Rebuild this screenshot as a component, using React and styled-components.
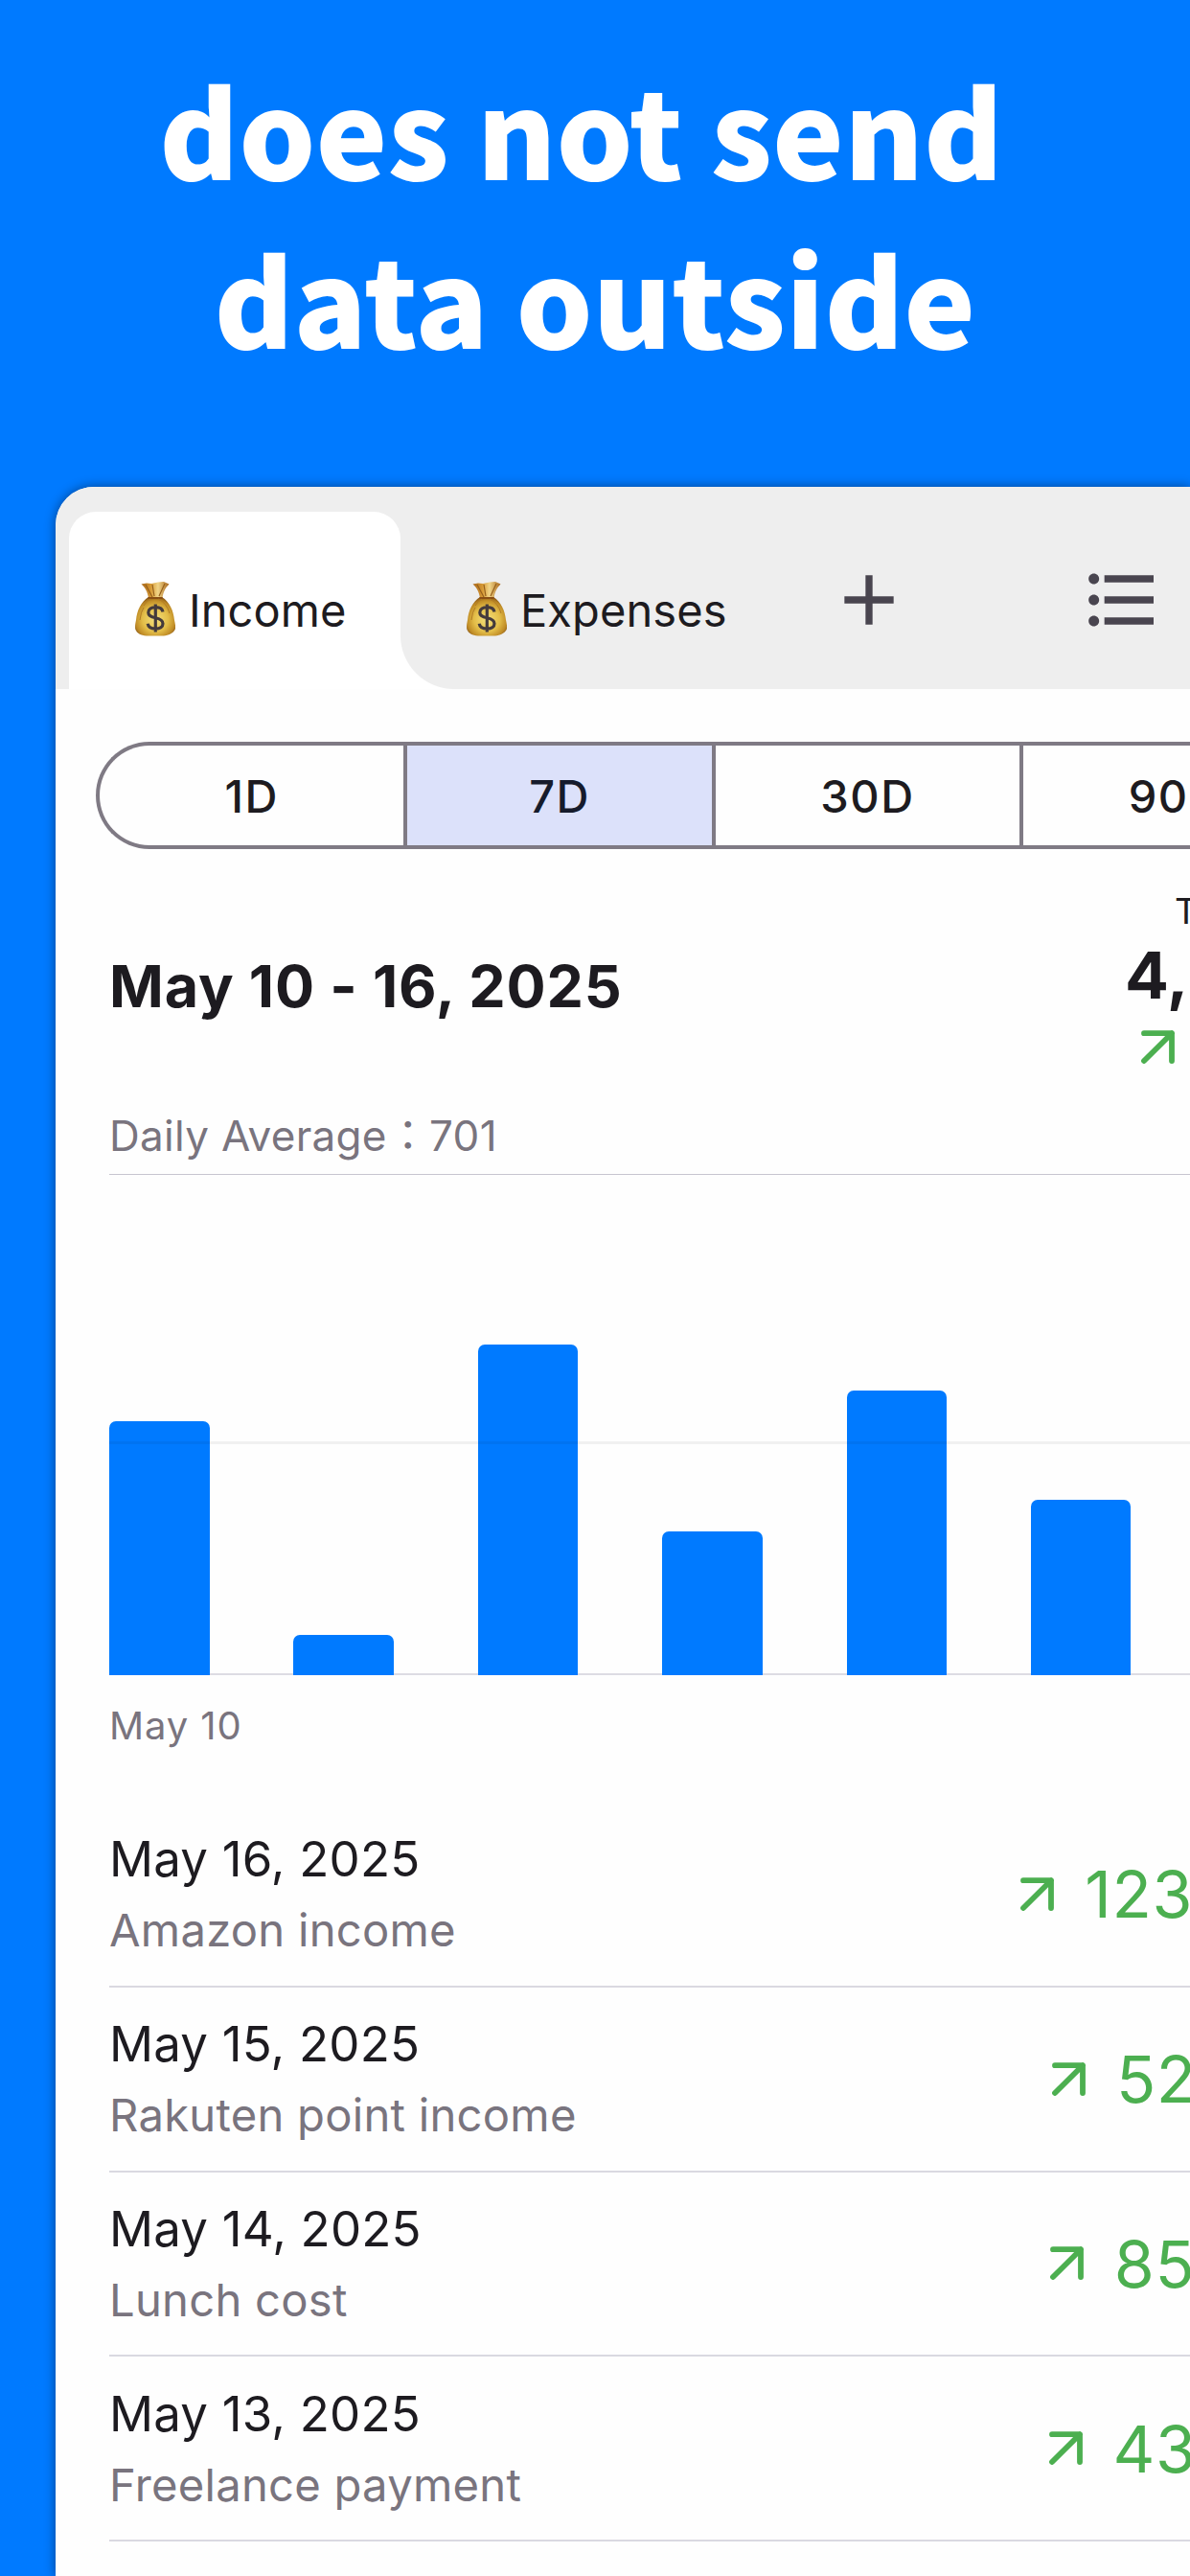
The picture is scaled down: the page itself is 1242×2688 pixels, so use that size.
import React, { Component } from 'react';
import styled, { createGlobalStyle } from 'styled-components';
import { MdAdd, MdFormatListBulleted } from 'react-icons/md';

const GlobalStyle = createGlobalStyle`
  html, body {
    margin: 0;
    padding: 0;
    background: #007aff;
  }

  * {
    box-sizing: border-box;
  }
`

const Page = styled.main`
  display: flex;
  flex-direction: column;
  width: 1242px;
  height: 2688px;
  overflow: hidden;
  background: #007aff;
  color: #1d1b20;
  font-family: Inter, "Noto Sans CJK JP", sans-serif;
`

const Headline = styled.h1`
  flex: 0 0 508px;
  margin: 0;
  padding-top: 45px;
  color: white;
  font-family: "Noto Sans CJK JP", sans-serif;
  font-size: 126px;
  font-weight: 900;
  line-height: 176px;
  text-align: center;
  white-space: pre;
`

const Panel = styled.section`
  flex: 1;
  margin-left: 58px;
  overflow: hidden;
  background: #fefefe;
  border-top-left-radius: 40px;
  box-shadow: 0 0 12px rgba(0, 0, 0, .45);
`

const TabBar = styled.nav`
  display: flex;
  align-items: stretch;
  height: 210.5px;
  padding: 26px 0 0 14px;
  background: #eee;
`

const Tab = styled.div`
  position: relative;
  display: flex;
  flex: 0 0 ${props => props.$width}px;
  align-items: flex-start;
  gap: 14px;
  padding: 73px 0 0 69px;
  border-radius: 28px 28px 0 0;
  background: ${props => props.$active ? '#fff' : 'transparent'};

  /* outward curve where the open tab meets the sheet */
  &::after {
    content: "";
    display: ${props => props.$active ? 'block' : 'none'};
    position: absolute;
    left: 100%;
    bottom: 0;
    width: 56px;
    height: 56px;
    background: radial-gradient(circle at 100% 0, transparent 55.5px, #fff 56.5px);
  }
`

const TabLabel = styled.span`
  font-size: 47px;
  line-height: 60px;
  letter-spacing: .1px;
`

const TabAction = styled.div`
  display: flex;
  margin: 47.5px 0 0 ${props => props.$space}px;
  color: #49454f;
  font-size: 88px;
`

const Body = styled.div`
  padding: 55.5px 0 0 56px;
`

const Segments = styled.div`
  display: grid;
  grid-template-columns: repeat(4, 321.4px);
  height: 112px;
  margin-left: -14px;
`

const Segment = styled.div`
  display: flex;
  align-items: center;
  justify-content: center;
  border: solid #7f7a84;
  border-width: 4px 0 4px 4px;
  background: ${props => props.$selected ? '#dce1fa' : 'transparent'};
  color: ${props => props.$selected ? '#161b2c' : '#1d1b20'};
  font-size: 47px;
  font-weight: 500;
  letter-spacing: 1.5px;

  &:first-child {
    border-radius: 56px 0 0 56px;
  }
`

const Summary = styled.div`
  display: flex;
  justify-content: space-between;
  height: 229px;
  margin-top: 43px;
`

const Period = styled.h2`
  margin: 62.5px 0 0;
  font-size: 61px;
  font-weight: 700;
  line-height: 74px;
  letter-spacing: .85px;
`

const Total = styled.div`
  flex: 0 0 68px;
  overflow: hidden;
`

const TotalLabel = styled.div`
  padding-left: 52px;
  font-size: 37px;
  line-height: 44px;
`

const TotalValue = styled.div`
  margin: 3px 0 17px;
  font-size: 68px;
  font-weight: 700;
  line-height: 82px;
`

const TotalTrend = styled.div`
  padding-left: 17px;
  line-height: 0;
`

const Average = styled.div`
  height: 68px;
  border-bottom: 1px solid #c7c5d0;
  color: #79747e;
  font-size: 44px;
  line-height: 54px;
  letter-spacing: .3px;
`

const Chart = styled.div`
  position: relative;
  display: flex;
  align-items: flex-end;
  gap: 87.9px;
  height: 522px;
  background: linear-gradient(#dddce3, #dddce3) bottom / 100% 2px no-repeat;
`

const Bar = styled.div`
  flex: 0 0 104.5px;
  border-radius: 7px 7px 0 0;
  background: #007aff;
`

const GridLine = styled.div`
  position: absolute;
  left: 0;
  right: 0;
  bottom: 241px;
  height: 3px;
  background: rgba(0, 0, 0, .05);
`

const AxisLabel = styled.div`
  margin-top: 29px;
  color: #79747e;
  font-size: 40px;
  line-height: 48px;
  letter-spacing: .9px;
`

const List = styled.ul`
  margin: 56px 0 0;
  padding: 0;
  list-style: none;
`

const Entry = styled.li`
  display: flex;
  align-items: center;
  justify-content: space-between;
  height: 192.75px;
  border-bottom: 2px solid #dad9e1;
`

const EntryDate = styled.div`
  margin-bottom: 14px;
  font-size: 51px;
  line-height: 62px;
  letter-spacing: .2px;
`

const EntryNote = styled.div`
  color: #79747e;
  font-size: 47.2px;
  line-height: 58px;
  letter-spacing: .25px;
`

const Amount = styled.div`
  display: flex;
  flex: 0 0 ${props => props.$width}px;
  align-items: center;
  gap: 32px;
  overflow: hidden;
  color: #4caf50;
  font-size: 68px;
  line-height: 82px;
  letter-spacing: .5px;
`

const bars = [265, 42, 345.5, 150, 296.7, 182.7];

const entries = [
  { date: 'May 16, 2025', note: 'Amazon income', amount: '123', width: 176.7 },
  { date: 'May 15, 2025', note: 'Rakuten point income', amount: '52', width: 144 },
  { date: 'May 14, 2025', note: 'Lunch cost', amount: '85', width: 146.2 },
  { date: 'May 13, 2025', note: 'Freelance payment', amount: '43', width: 147.4 },
];

const ArrowIcon = styled.svg`
  flex: none;
  width: 35px;
  height: 35px;
`

const BagIcon = styled.svg`
  flex: none;
  width: 42px;
  height: 57px;
`

const Arrow = () => (
  <ArrowIcon viewBox="0 0 35 35" fill="none">
    <path
      d="M3 3.2H32V32M32 3.2L3 32"
      stroke="#4caf50"
      strokeWidth="5.8"
      strokeLinecap="round"
      strokeLinejoin="round"
    />
  </ArrowIcon>
)

const MoneyBag = () => (
  <BagIcon viewBox="0 0 42 57">
    <defs>
      <radialGradient id="sack" cx=".5" cy=".58" r=".58">
        <stop offset="0" stopColor="#f4df7c" />
        <stop offset=".55" stopColor="#e3bd48" />
        <stop offset=".85" stopColor="#c08c26" />
        <stop offset="1" stopColor="#8c5a18" />
      </radialGradient>
      <linearGradient id="neck" x1="0" y1="0" x2="1" y2="0">
        <stop offset="0" stopColor="#a8661a" />
        <stop offset=".35" stopColor="#d79a35" />
        <stop offset=".6" stopColor="#f1d588" />
        <stop offset="1" stopColor="#a8661a" />
      </linearGradient>
    </defs>
    <path d="M6.5 2.5L12 1.5L17 2L24 .5L30 0L35.5 2.5C31 7 29.5 11 28.5 17H14C13 11 11 6.5 6.5 2.5Z" fill="url(#neck)" />
    <path d="M11 3L18 16M18 3L20 15M31 2L25 15" stroke="#96601c" strokeWidth="1.2" fill="none" />
    <path d="M14 16H28C36 21 40 30 41 40C42 45 43 49 41 51C38 55 33 56.5 28 56.5H14C8 56.5 3 55 1 51C-.5 49 0 45 1 40C2 30 6 21 14 16Z" fill="url(#sack)" />
    <path d="M13.5 17H28.5" stroke="#8a4f14" strokeWidth="2" />
    <path d="M9 25Q12 20 16 18M24 18Q33 22 36 33M5 40Q6 31 9 27" stroke="#b17c25" strokeWidth="1" fill="none" />
    <path
      d="M29 31.5C28.5 28.5 25.5 26.7 21.5 26.7C17 26.7 13.8 28.8 13.8 32.2C13.8 35.5 16.5 36.7 21.5 37.8C26.8 39 29 40.5 29 43.8C29 47.2 26 49.2 21.5 49.2C17 49.2 13.7 47.2 13.2 43.8M21.3 23.5V52.5"
      stroke="#443a3c"
      strokeWidth="3.2"
      fill="none"
    />
  </BagIcon>
)

class App extends Component {
  render() {
    return (
      <Page>
        <GlobalStyle />
        <Headline>{'does not send \ndata outside'}</Headline>

        <Panel>
          <TabBar>
            <Tab $active $width={346}>
              <MoneyBag />
              <TabLabel>Income</TabLabel>
            </Tab>
            <Tab $width={399}>
              <MoneyBag />
              <TabLabel>Expenses</TabLabel>
            </Tab>
            <TabAction $space={46}>
              <MdAdd />
            </TabAction>
            <TabAction $space={175.5}>
              <MdFormatListBulleted />
            </TabAction>
          </TabBar>

          <Body>
            <Segments>
              <Segment>1D</Segment>
              <Segment $selected>7D</Segment>
              <Segment>30D</Segment>
              <Segment>90D</Segment>
            </Segments>

            <Summary>
              <Period>May 10 - 16, 2025</Period>
              <Total>
                <TotalLabel>Total</TotalLabel>
                <TotalValue>4,</TotalValue>
                <TotalTrend>
                  <Arrow />
                </TotalTrend>
              </Total>
            </Summary>

            <Average>Daily Average：701</Average>

            <Chart>
              {bars.map((height, i) => (
                <Bar key={i} style={{ height }} />
              ))}
              <GridLine />
            </Chart>
            <AxisLabel>May 10</AxisLabel>

            <List>
              {entries.map(entry => (
                <Entry key={entry.date}>
                  <div>
                    <EntryDate>{entry.date}</EntryDate>
                    <EntryNote>{entry.note}</EntryNote>
                  </div>
                  <Amount $width={entry.width}>
                    <Arrow />
                    {entry.amount}
                  </Amount>
                </Entry>
              ))}
            </List>
          </Body>
        </Panel>
      </Page>
    );
  }
}

export default App;
